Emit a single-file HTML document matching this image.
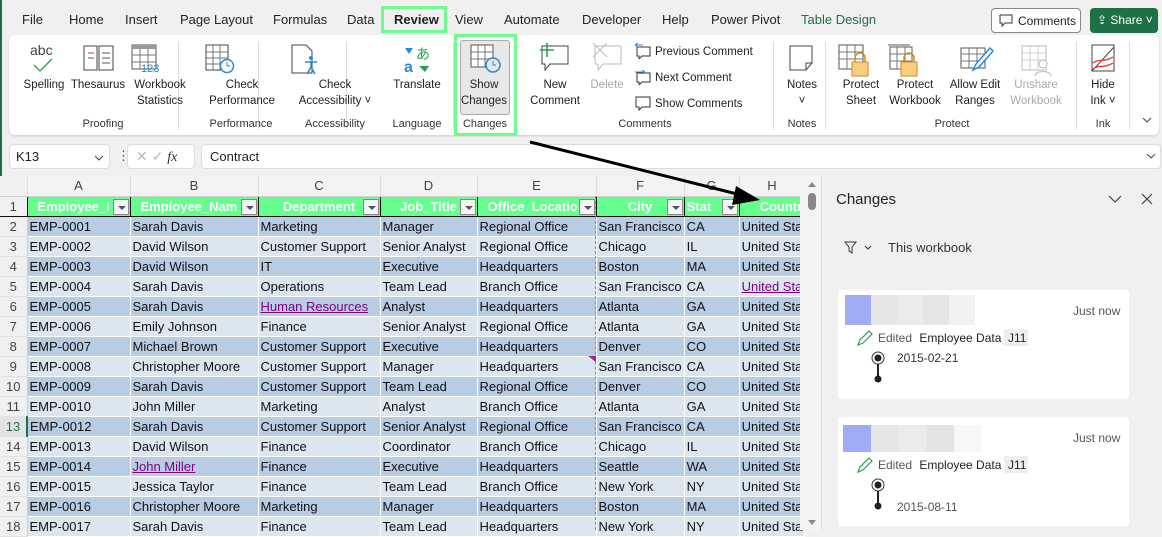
<!DOCTYPE html>
<html><head><meta charset="utf-8"><style>
*{box-sizing:border-box;margin:0;padding:0}
body{width:1162px;height:530px;overflow:hidden;background:#f0f0f0;font-family:"Liberation Sans",sans-serif;color:#222;position:relative}
.a{position:absolute}
.tab{position:absolute;top:12px;font-size:13px;color:#222;white-space:nowrap}
.rb{position:absolute;font-size:11.5px;color:#222;text-align:center;line-height:16px;width:90px;white-space:nowrap}
.gl{position:absolute;top:118px;font-size:11px;color:#333;width:120px;text-align:center}
.sep{position:absolute;top:42px;width:1px;height:88px;background:#dcdcdc}
table{position:absolute;left:0;top:176px;border-collapse:collapse;table-layout:fixed;font-size:13px}
td{height:20px;padding:0 2px;white-space:nowrap;overflow:hidden;border-right:1px solid #fff;border-bottom:1px solid #fff;line-height:19px;color:#111}
td.rh{background:#f0f0f0 !important;color:#444 !important;text-align:center;border-right:1px solid #cfcfcf;border-bottom:1px solid #e2e2e2;padding:0;font-weight:normal !important}
tr.ch td{background:#f3f3f3;color:#444;text-align:center;border-right:1px solid #dedede;border-bottom:1px solid #cfcfcf}
tr.hd td{background:#66ff8f;color:#fff;font-weight:bold;text-align:center;position:relative;border-right:1px solid #111;border-bottom:1px solid #111}
tr.d td{background:#b8cce4}
tr.l td{background:#dce6f1}
.fb{position:absolute;right:1px;top:2px;width:16px;height:16px;background:#f5f5f5;border:1px solid #888}
.fb:after{content:"";position:absolute;left:4px;top:6px;border-left:4px solid transparent;border-right:4px solid transparent;border-top:4px solid #555}
.lk{color:#800080;text-decoration:underline}
.card{position:absolute;left:838px;width:291px;background:#fff;border-radius:3px}
</style></head><body>
<div class="a" style="left:0;top:0;width:2px;height:530px;background:#1e7145"></div>
<div class="tab" style="left:22px">File</div>
<div class="tab" style="left:69px">Home</div>
<div class="tab" style="left:125px">Insert</div>
<div class="tab" style="left:180px">Page Layout</div>
<div class="tab" style="left:273px">Formulas</div>
<div class="tab" style="left:347px">Data</div>
<div class="a" style="left:381px;top:6px;width:66px;height:27px;border:3px solid #6efc8c"></div>
<div class="tab" style="left:394px;font-weight:bold">Review</div>
<div class="tab" style="left:455px">View</div>
<div class="tab" style="left:504px">Automate</div>
<div class="tab" style="left:582px">Developer</div>
<div class="tab" style="left:662px">Help</div>
<div class="tab" style="left:711px">Power Pivot</div>
<div class="tab" style="left:801px;color:#1e7145">Table Design</div>
<div class="a" style="left:991px;top:8px;width:90px;height:25px;border:1px solid #888;border-radius:4px;background:#fff;font-size:12px;padding:5px 0 0 26px;white-space:nowrap">Comments</div>
<svg class="a" style="left:999px;top:14px" width="14" height="14"><path d="M1 1h12v8H6l-3 3V9H1z" fill="none" stroke="#333"/></svg>
<div class="a" style="left:1090px;top:8px;width:68px;height:25px;border-radius:4px;background:#1e7145;color:#fff;font-size:12px;padding:5px 0 0 7px;white-space:nowrap">⇪ Share ˅</div>
<div class="a" style="left:9px;top:35px;width:1150px;height:100px;background:#fff;border-radius:6px;box-shadow:0 1px 2px #ccc"></div>
<div class="sep" style="left:178px"></div><div class="sep" style="left:258px"></div><div class="sep" style="left:346px"></div><div class="sep" style="left:453px"></div><div class="sep" style="left:773px"></div><div class="sep" style="left:825px"></div><div class="sep" style="left:1076px"></div><div class="sep" style="left:1129px"></div>
<div class="a" style="left:30px;top:42px;font-size:14px;color:#444">abc</div>
<svg class="a" style="left:32px;top:58px" width="22" height="16"><path d="M2 7l6 6L20 1" stroke="#2e9e4e" fill="none" stroke-width="1.3"/></svg>
<svg class="a" style="left:82px;top:44px" width="34" height="28"><path d="M2 2h13v24H2zM17 2h14v24H17z" fill="#fff" stroke="#444"/><path d="M6 9h6M6 14h6M20 9h8M20 14h8M20 19h8" stroke="#555"/><path d="M6 9h6" stroke="#d33"/></svg>
<svg class="a" style="left:131px;top:44px" width="30" height="30"><rect x="1" y="1" width="24" height="24" fill="#fff" stroke="#555"/><rect x="1" y="1" width="24" height="4" fill="#999"/><path d="M1 11h24M1 18h24M9 5v20M17 5v20" stroke="#777"/><text x="10" y="28" font-size="11" fill="#2a8ad8" font-family="Liberation Sans">123</text></svg>
<svg class="a" style="left:205px;top:44px" width="30" height="30"><path d="M1 1h22v25H1z" fill="#fff" stroke="#444"/><path d="M1 8h22M1 14h22M1 20h22M8 1v25M15 1v25" stroke="#777"/><circle cx="22" cy="22" r="6.5" fill="#fff" stroke="#2a8ad8" stroke-width="1.5"/><path d="M22 18v4h3" stroke="#2a8ad8" fill="none"/></svg>
<svg class="a" style="left:290px;top:44px" width="30" height="32"><path d="M2 1h14l6 6v22H2z" fill="#fff" stroke="#444"/><circle cx="21" cy="14" r="2" fill="#2a8ad8"/><path d="M15 18h12M21 17v6l-4 7M21 23l4 7" stroke="#2a8ad8" stroke-width="1.6" fill="none"/></svg>
<svg class="a" style="left:403px;top:44px" width="28" height="30"><path d="M2 4h8l-4 6z" fill="#2a8ad8"/><text x="1" y="28" font-size="16" fill="#2a8ad8" font-weight="bold" font-family="Liberation Sans">a</text><text x="13" y="15" font-size="14" fill="#2e9e4e" font-family="Noto Sans CJK JP">あ</text><path d="M16 22h10l-4 6z" fill="#2e9e4e"/></svg>
<div class="a" style="left:460px;top:40px;width:50px;height:75px;background:#e8e8e8;border:1px solid #aaa;border-radius:3px"></div>
<div class="a" style="left:454px;top:34px;width:63px;height:102px;border:3px solid #6efc8c"></div>
<svg class="a" style="left:469px;top:44px" width="34" height="30"><path d="M2 1h22v22H2z" fill="#fff" stroke="#555"/><path d="M2 8h22M2 15h22M9 1v22M16 1v22" stroke="#777"/><circle cx="24" cy="21" r="7" fill="#e8e8e8" stroke="#2a8ad8" stroke-width="1.5"/><path d="M24 17v4h3" stroke="#2a8ad8" fill="none"/></svg>
<svg class="a" style="left:538px;top:42px" width="34" height="30"><path d="M4 4h26v18H12l-5 6v-6H4z" fill="#fff" stroke="#444"/><path d="M2 8h14M9 1v14" stroke="#2e9e4e" stroke-width="1.6"/></svg>
<svg class="a" style="left:591px;top:42px" width="34" height="30"><path d="M4 4h26v18H12l-5 6v-6H4z" fill="#fff" stroke="#bbb"/><path d="M2 1l14 14M16 1L2 15" stroke="#bbb"/></svg>
<svg class="a" style="left:634px;top:43px" width="18" height="16"><path d="M3 4h13v9H8l-3 3v-3H3z" fill="none" stroke="#333"/><path d="M1 2h8M1 2l3-2M1 2l3 2" stroke="#2a8ad8"/></svg>
<svg class="a" style="left:634px;top:69px" width="18" height="16"><path d="M3 4h13v9H8l-3 3v-3H3z" fill="none" stroke="#333"/><path d="M1 3h10M11 3l-3-2M11 3l-3 2" stroke="#2a8ad8"/></svg>
<svg class="a" style="left:634px;top:95px" width="18" height="16"><path d="M2 2h14v10H8l-3 3v-3H2z" fill="none" stroke="#333"/></svg>
<div class="rb" style="left:655px;top:44px;text-align:left">Previous Comment</div>
<div class="rb" style="left:655px;top:70px;text-align:left">Next Comment</div>
<div class="rb" style="left:655px;top:96px;text-align:left">Show Comments</div>
<svg class="a" style="left:788px;top:44px" width="26" height="28"><path d="M2 2h22v17l-6 7H2z" fill="#fff" stroke="#444"/><path d="M18 26v-7h6" fill="none" stroke="#444"/></svg>
<svg class="a" style="left:838px;top:44px" width="32" height="34"><path d="M1 1h24v24H1z" fill="#fff" stroke="#555"/><path d="M1 8h24M1 15h24M9 1v24M17 1v24" stroke="#777"/><rect x="14" y="18" width="16" height="14" fill="#f7ce7e" stroke="#d58a1f"/><path d="M17 18v-4a5 5 0 0 1 10 0v4" fill="none" stroke="#d58a1f" stroke-width="1.5"/></svg>
<svg class="a" style="left:887px;top:44px" width="32" height="34"><path d="M3 3h22v22H3z" fill="#fff" stroke="#555"/><path d="M1 1h22" stroke="#555"/><path d="M3 10h22M3 17h22M10 3v22M18 3v22" stroke="#777"/><rect x="14" y="18" width="16" height="14" fill="#f7ce7e" stroke="#d58a1f"/><path d="M17 18v-4a5 5 0 0 1 10 0v4" fill="none" stroke="#d58a1f" stroke-width="1.5"/></svg>
<svg class="a" style="left:960px;top:44px" width="34" height="34"><path d="M1 4h24v20H1z" fill="#fff" stroke="#555"/><path d="M1 10h24M1 17h24M9 4v20M17 4v20" stroke="#777"/><path d="M30 4l-14 16-3 6 6-3 14-16z" fill="#fff" stroke="#2a8ad8" stroke-width="1.5"/></svg>
<svg class="a" style="left:1021px;top:44px" width="32" height="34"><path d="M1 2h24v24H1z" fill="#fff" stroke="#bbb"/><path d="M1 9h24M1 16h24M9 2v24M17 2v24" stroke="#ccc"/><circle cx="22" cy="20" r="4" fill="#fff" stroke="#bbb"/><path d="M14 32c0-6 16-6 16 0" fill="#fff" stroke="#bbb"/></svg>
<svg class="a" style="left:1090px;top:43px" width="28" height="30"><path d="M2 2h22v26H2z" fill="#fff" stroke="#444"/><path d="M2 28L24 4" stroke="#444"/><path d="M3 20c6-5 10 0 20-6M3 26c6-5 10 0 20-6" stroke="#e33" fill="none" stroke-width="1.3"/></svg>
<div class="rb" style="left:-1px;top:77px">Spelling</div>
<div class="rb" style="left:53px;top:77px">Thesaurus</div>
<div class="rb" style="left:115px;top:77px">Workbook<br>Statistics</div>
<div class="rb" style="left:197px;top:77px">Check<br>Performance</div>
<div class="rb" style="left:290px;top:77px">Check<br>Accessibility ˅</div>
<div class="rb" style="left:372px;top:77px">Translate</div>
<div class="rb" style="left:439px;top:77px">Show<br>Changes</div>
<div class="rb" style="left:510px;top:77px">New<br>Comment</div>
<div class="rb" style="left:562px;top:77px;color:#aaa">Delete</div>
<div class="rb" style="left:757px;top:77px">Notes<br>˅</div>
<div class="rb" style="left:816px;top:77px">Protect<br>Sheet</div>
<div class="rb" style="left:870px;top:77px">Protect<br>Workbook</div>
<div class="rb" style="left:930px;top:77px">Allow Edit<br>Ranges</div>
<div class="rb" style="left:991px;top:77px;color:#aaa">Unshare<br>Workbook</div>
<div class="rb" style="left:1058px;top:77px">Hide<br>Ink ˅</div>
<div class="gl" style="left:43px">Proofing</div>
<div class="gl" style="left:181px">Performance</div>
<div class="gl" style="left:275px">Accessibility</div>
<div class="gl" style="left:357px">Language</div>
<div class="gl" style="left:425px">Changes</div>
<div class="gl" style="left:585px">Comments</div>
<div class="gl" style="left:742px">Notes</div>
<div class="gl" style="left:892px">Protect</div>
<div class="gl" style="left:1043px">Ink</div>
<svg class="a" style="left:1142px;top:116px" width="10" height="8"><path d="M1 2l4 4 4-4" fill="none" stroke="#444"/></svg>
<div class="a" style="left:9px;top:144px;width:101px;height:25px;background:#fff;border:1px solid #ddd;border-radius:4px;font-size:13px;padding:4px 0 0 6px">K13</div>
<svg class="a" style="left:94px;top:154px" width="10" height="8"><path d="M1 2l4 4 4-4" fill="none" stroke="#444"/></svg>
<div class="a" style="left:117px;top:148px;font-size:13px;color:#555">⋮</div>
<div class="a" style="left:127px;top:144px;width:68px;height:25px;background:#fff;border:1px solid #ddd;border-radius:4px;font-size:14px;color:#bbb;padding:3px 0 0 8px;white-space:nowrap">✕ ✓ <i style="color:#333;font-family:'Liberation Serif'">fx</i></div>
<div class="a" style="left:201px;top:144px;width:960px;height:25px;background:#fff;border:1px solid #ddd;border-radius:4px;font-size:13px;padding:4px 0 0 8px">Contract</div>
<svg class="a" style="left:1146px;top:152px" width="10" height="8"><path d="M1 2l4 4 4-4" fill="none" stroke="#444"/></svg>
<table>
<colgroup><col style="width:27px"><col style="width:103px"><col style="width:128px"><col style="width:122px"><col style="width:97px"><col style="width:119px"><col style="width:88px"><col style="width:55px"><col style="width:61px"></colgroup>
<tr class="ch"><td class="rh"></td><td>A</td><td>B</td><td>C</td><td>D</td><td>E</td><td>F</td><td>G</td><td>H</td></tr>
<tr class="hd"><td class="rh">1</td><td style="text-align:left;padding-left:10px">Employee_I<i class="fb"></i></td><td style="text-align:left;padding-left:10px">Employee_Nam<i class="fb"></i></td><td>Department<i class="fb"></i></td><td>Job_Title<i class="fb"></i></td><td style="text-align:left;padding-left:10px">Office_Locatio<i class="fb"></i></td><td>City<i class="fb"></i></td><td style="text-align:left">Stat<i class="fb"></i></td><td style="text-align:left;padding-left:20px">Countr</td></tr>
<tr class="d"><td class="rh">2</td><td>EMP-0001</td><td>Sarah Davis</td><td>Marketing</td><td>Manager</td><td>Regional Office</td><td>San Francisco</td><td>CA</td><td>United Sta</td></tr>
<tr class="l"><td class="rh">3</td><td>EMP-0002</td><td>David Wilson</td><td>Customer Support</td><td>Senior Analyst</td><td>Regional Office</td><td>Chicago</td><td>IL</td><td>United Sta</td></tr>
<tr class="d"><td class="rh">4</td><td>EMP-0003</td><td>David Wilson</td><td>IT</td><td>Executive</td><td>Headquarters</td><td>Boston</td><td>MA</td><td>United Sta</td></tr>
<tr class="l"><td class="rh">5</td><td>EMP-0004</td><td>Sarah Davis</td><td>Operations</td><td>Team Lead</td><td>Branch Office</td><td>San Francisco</td><td>CA</td><td><span class="lk">United Sta</span></td></tr>
<tr class="d"><td class="rh">6</td><td>EMP-0005</td><td>Sarah Davis</td><td><span class="lk">Human Resources</span></td><td>Analyst</td><td>Headquarters</td><td>Atlanta</td><td>GA</td><td>United Sta</td></tr>
<tr class="l"><td class="rh">7</td><td>EMP-0006</td><td>Emily Johnson</td><td>Finance</td><td>Senior Analyst</td><td>Regional Office</td><td>Atlanta</td><td>GA</td><td>United Sta</td></tr>
<tr class="d"><td class="rh">8</td><td>EMP-0007</td><td>Michael Brown</td><td>Customer Support</td><td>Executive</td><td>Headquarters</td><td>Denver</td><td>CO</td><td>United Sta</td></tr>
<tr class="l"><td class="rh">9</td><td>EMP-0008</td><td>Christopher Moore</td><td>Customer Support</td><td>Manager</td><td>Headquarters</td><td>San Francisco</td><td>CA</td><td>United Sta</td></tr>
<tr class="d"><td class="rh">10</td><td>EMP-0009</td><td>Sarah Davis</td><td>Customer Support</td><td>Team Lead</td><td>Regional Office</td><td>Denver</td><td>CO</td><td>United Sta</td></tr>
<tr class="l"><td class="rh">11</td><td>EMP-0010</td><td>John Miller</td><td>Marketing</td><td>Analyst</td><td>Branch Office</td><td>Atlanta</td><td>GA</td><td>United Sta</td></tr>
<tr class="d"><td class="rh" style="color:#1e7145 !important;border-right:2px solid #1e7145;background:#e3e3e3 !important">13</td><td>EMP-0012</td><td>Sarah Davis</td><td>Customer Support</td><td>Senior Analyst</td><td>Regional Office</td><td>San Francisco</td><td>CA</td><td>United Sta</td></tr>
<tr class="l"><td class="rh">14</td><td>EMP-0013</td><td>David Wilson</td><td>Finance</td><td>Coordinator</td><td>Branch Office</td><td>Chicago</td><td>IL</td><td>United Sta</td></tr>
<tr class="d"><td class="rh">15</td><td>EMP-0014</td><td><span class="lk">John Miller</span></td><td>Finance</td><td>Executive</td><td>Headquarters</td><td>Seattle</td><td>WA</td><td>United Sta</td></tr>
<tr class="l"><td class="rh">16</td><td>EMP-0015</td><td>Jessica Taylor</td><td>Finance</td><td>Team Lead</td><td>Branch Office</td><td>New York</td><td>NY</td><td>United Sta</td></tr>
<tr class="d"><td class="rh">17</td><td>EMP-0016</td><td>Christopher Moore</td><td>Marketing</td><td>Manager</td><td>Headquarters</td><td>Boston</td><td>MA</td><td>United Sta</td></tr>
<tr class="l"><td class="rh">18</td><td>EMP-0017</td><td>Sarah Davis</td><td>Finance</td><td>Team Lead</td><td>Headquarters</td><td>New York</td><td>NY</td><td>United Sta</td></tr>
</table>
<div class="a" style="left:595px;top:196px;height:334px;border-left:1px dashed #888"></div>
<div class="a" style="left:588px;top:356px;border-left:8px solid transparent;border-top:6px solid #a020a0"></div>
<svg class="a" style="left:0;top:0" width="800" height="230"><path d="M530 142L745 196" stroke="#000" stroke-width="3"/><path d="M760 200L736 186L732 205z" fill="#000"/></svg>
<div class="a" style="left:800px;top:176px;width:22px;height:354px;background:#f3f3f3;border-right:1px solid #ddd"></div>
<div class="a" style="left:808px;top:182px;border-left:4px solid transparent;border-right:4px solid transparent;border-bottom:5px solid #888"></div>
<div class="a" style="left:808px;top:193px;width:8px;height:17px;border-radius:4px;background:#888"></div>
<div class="a" style="left:808px;top:520px;border-left:4px solid transparent;border-right:4px solid transparent;border-top:5px solid #888"></div>
<div class="a" style="left:836px;top:191px;font-size:15px;color:#222">Changes</div>
<svg class="a" style="left:1108px;top:195px" width="14" height="9"><path d="M1 1l6 6 6-6" fill="none" stroke="#444" stroke-width="1.2"/></svg>
<svg class="a" style="left:1141px;top:193px" width="12" height="12"><path d="M1 1l10 10M11 1L1 11" stroke="#444" stroke-width="1.2"/></svg>
<svg class="a" style="left:844px;top:241px" width="30" height="14"><path d="M1 1h11L8 6v6l-3-2V6z" fill="none" stroke="#333"/><path d="M21 5l3 3 3-3" fill="none" stroke="#333"/></svg>
<div class="a" style="left:888px;top:240px;font-size:13px;color:#333">This workbook</div>
<div class="card" style="top:290px;height:109px"></div>
<div class="a" style="left:845px;top:295px;width:26px;height:30px;background:#a0acf5"></div>
<div class="a" style="left:871px;top:295px;width:104px;height:30px;background:linear-gradient(90deg,#e6e6e6 0 25%,#ebebeb 25% 50%,#e6e6e6 50% 75%,#f2f2f2 75%)"></div>
<div class="a" style="left:1073px;top:304px;font-size:12px;color:#555">Just now</div>
<svg class="a" style="left:856px;top:329px" width="18" height="18"><path d="M2 16l2-5 9-9 3 3-9 9z" fill="none" stroke="#2e9e4e" stroke-width="1.2"/></svg>
<div class="a" style="left:878px;top:331px;font-size:12px;color:#555;white-space:nowrap">Edited <span style="color:#222;margin-left:4px">Employee Data</span></div>
<div class="a" style="left:1004px;top:329px;width:24px;height:17px;background:#eee;font-size:12px;padding:2px 0 0 4px">J11</div>
<svg class="a" style="left:870px;top:350px" width="16" height="36"><circle cx="8" cy="8" r="6" fill="#fff" stroke="#333"/><circle cx="8" cy="8" r="3.5" fill="#222"/><path d="M8 14v14" stroke="#222" stroke-width="2"/><circle cx="8" cy="29" r="3.5" fill="#222"/></svg>
<div class="a" style="left:897px;top:351px;font-size:12px;color:#333">2015-02-21</div>
<div class="card" style="top:417px;height:109px"></div>
<div class="a" style="left:843px;top:425px;width:28px;height:27px;background:#a0acf5"></div>
<div class="a" style="left:871px;top:425px;width:111px;height:27px;background:linear-gradient(90deg,#e6e6e6 0 25%,#ebebeb 25% 50%,#e3e3e3 50% 75%,#f7f7f7 75%)"></div>
<div class="a" style="left:1073px;top:431px;font-size:12px;color:#555">Just now</div>
<svg class="a" style="left:856px;top:456px" width="18" height="18"><path d="M2 16l2-5 9-9 3 3-9 9z" fill="none" stroke="#2e9e4e" stroke-width="1.2"/></svg>
<div class="a" style="left:878px;top:458px;font-size:12px;color:#555;white-space:nowrap">Edited <span style="color:#222;margin-left:4px">Employee Data</span></div>
<div class="a" style="left:1004px;top:456px;width:24px;height:17px;background:#eee;font-size:12px;padding:2px 0 0 4px">J11</div>
<svg class="a" style="left:870px;top:477px" width="16" height="36"><circle cx="8" cy="8" r="6" fill="#fff" stroke="#333"/><circle cx="8" cy="8" r="3.5" fill="#222"/><path d="M8 14v14" stroke="#222" stroke-width="2"/><circle cx="8" cy="29" r="3.5" fill="#222"/></svg>
<div class="a" style="left:897px;top:500px;font-size:12px;color:#555">2015-08-11</div>
</body></html>
